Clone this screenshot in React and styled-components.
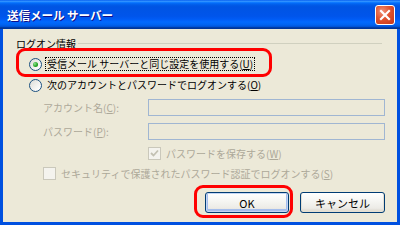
import styled, { createGlobalStyle } from 'styled-components'

const GlobalStyle = createGlobalStyle`
    html, body {
        margin: 0;
        padding: 0;
        width: 400px;
        height: 225px;
        overflow: hidden;
        background: #ece9d8;
    }
`

const font = `"Noto Sans CJK JP", "Noto Sans", sans-serif`

const Window = styled.div`
    width: 400px;
    height: 225px;
    display: flex;
    flex-direction: column;
    background: #0050e0;
    font-family: ${font};
    box-sizing: border-box;
`

const TitleBar = styled.div`
    height: 29px;
    flex: none;
    display: flex;
    align-items: center;
    justify-content: space-between;
    padding: 1px 5px 0 7px;
    box-sizing: border-box;
    background: linear-gradient(
        to bottom,
        #0058ee 0%,
        #3593ff 4%,
        #288eff 6%,
        #127dff 8%,
        #036ffc 10%,
        #0262ee 14%,
        #0057e5 20%,
        #0054e3 24%,
        #0055eb 56%,
        #005bf5 66%,
        #026afe 76%,
        #0062ef 86%,
        #0052d6 92%,
        #0040ab 94%,
        #003092 100%
    );

    .title {
        color: #fff;
        font-size: 11.5px;
        font-weight: 700;
        text-shadow: 1px 1px #0f1089;
    }
`

const CloseButton = styled.div`
    width: 20px;
    height: 20px;
    box-sizing: border-box;
    border: 1px solid #fff;
    border-radius: 3px;
    background: radial-gradient(circle at 35% 30%, #f0927a 0%, #e0532f 45%, #c2361a 100%);
    display: flex;
    align-items: center;
    justify-content: center;
`

const Body = styled.div`
    flex: 1;
    margin: 0 3px 3px 3px;
    background: #ece9d8;
    padding: 8px 12px 0 9px;
    display: flex;
    flex-direction: column;
    font-size: 10px;
    color: #000;
`

const GroupHeader = styled.div`
    height: 12px;
    display: flex;
    align-items: center;
    gap: 2px;
    padding-left: 4px;
    margin-right: 3px;

    .line {
        flex: 1;
        height: 1px;
        background: #d0d0bf;
        margin-top: 1px;
    }
`

const Options = styled.div`
    display: flex;
    flex-direction: column;
    gap: 7px;
    margin-top: 8px;
    padding-left: 17px;
`

const RadioRow = styled.div`
    position: relative;
    height: 14px;
    display: flex;
    align-items: center;
    gap: 3px;
    align-self: flex-start;

    ${p => p.$marked && `
        &::after {
            content: '';
            position: absolute;
            left: -13px;
            top: -9px;
            width: 256px;
            height: 29px;
            box-sizing: border-box;
            border: 3px solid #f00;
            border-radius: 9px;
            pointer-events: none;
        }
    `}
`

const Radio = styled.span`
    width: 13px;
    height: 13px;
    box-sizing: border-box;
    border-radius: 50%;
    border: 1px solid #1c5180;
    background: linear-gradient(135deg, #dcdcd7 0%, #ffffff 90%);
    display: flex;
    align-items: center;
    justify-content: center;
    flex: none;

    &::after {
        content: '';
        display: ${p => (p.$checked ? 'block' : 'none')};
        width: 5px;
        height: 5px;
        border-radius: 50%;
        background: radial-gradient(circle at 35% 35%, #8de38d 0%, #21a121 60%, #1a8a1a 100%);
    }
`

const OptionText = styled.span`
    line-height: 12px;
    white-space: nowrap;
    padding: 0 1px;
    border: 1px dotted ${p => (p.$focused ? '#000' : 'transparent')};
    color: ${p => (p.$disabled ? '#aca899' : '#000')};
`

const FieldRow = styled.div`
    height: 17px;
    display: flex;
    align-items: center;
    padding-left: 14px;
`

const FieldLabel = styled.span`
    width: 105px;
    flex: none;
    color: #aca899;
    white-space: nowrap;
`

const TextBox = styled.div`
    flex: 1;
    height: 17px;
    box-sizing: border-box;
    border: 1px solid #a0b6d2;
    background: #ece9d8;
`

const CheckRow = styled.div`
    height: 13px;
    display: flex;
    align-items: center;
    gap: 3px;
    padding-left: ${p => p.$indent}px;
`

const CheckBox = styled.span`
    width: 13px;
    height: 13px;
    box-sizing: border-box;
    border: 1px solid #cac8bb;
    background: #f4f3ee;
    display: flex;
    align-items: center;
    justify-content: center;
    flex: none;
`

const ButtonRow = styled.div`
    display: flex;
    justify-content: flex-end;
    gap: 11px;
    margin-top: 12px;
`

const Button = styled.div`
    position: relative;
    width: ${p => p.$width}px;
    height: 21px;
    box-sizing: border-box;
    border: 1px solid #003c74;
    border-radius: 3px;
    background: linear-gradient(to bottom, #ffffff 0%, #f6f6f3 40%, #ecebe6 80%, #d6d0c5 100%);
    display: flex;
    align-items: center;
    justify-content: center;
    font-size: 11px;
    font-weight: 400;
    color: #000;
    box-shadow: ${p => (p.$default ? 'inset 0 0 0 1px #c4d6f4, inset 0 -1px 0 2px #a4bdec' : 'inset 0 -1px 0 1px #e3dfd3')};

    ${p => p.$marked && `
        &::after {
            content: '';
            position: absolute;
            left: -12px;
            top: -8px;
            width: 99px;
            height: 33px;
            box-sizing: border-box;
            border: 3px solid #f00;
            border-radius: 9px;
            pointer-events: none;
        }
    `}
`

export default function App() {
    return (
        <>
            <GlobalStyle />
            <Window>
                <TitleBar>
                    <span className='title'>送信メール サーバー</span>
                    <CloseButton>
                        <svg width='12' height='12' viewBox='0 0 12 12'>
                            <path d='M2 2 L10 10 M10 2 L2 10' stroke='#fff' strokeWidth='2.2' strokeLinecap='square' />
                        </svg>
                    </CloseButton>
                </TitleBar>
                <Body>
                    <GroupHeader>
                        <span>ログオン情報</span>
                        <span className='line' />
                    </GroupHeader>
                    <Options>
                        <RadioRow $marked>
                            <Radio $checked />
                            <OptionText $focused>
                                受信メール サーバーと同じ設定を使用する(<u>U</u>)
                            </OptionText>
                        </RadioRow>
                        <RadioRow>
                            <Radio />
                            <OptionText>
                                次のアカウントとパスワードでログオンする(<u>O</u>)
                            </OptionText>
                        </RadioRow>
                        <FieldRow>
                            <FieldLabel>アカウント名(<u>C</u>):</FieldLabel>
                            <TextBox />
                        </FieldRow>
                        <FieldRow>
                            <FieldLabel>パスワード(<u>P</u>):</FieldLabel>
                            <TextBox />
                        </FieldRow>
                        <CheckRow $indent={119}>
                            <CheckBox>
                                <svg width='9' height='9' viewBox='0 0 9 9'>
                                    <path d='M1 4 L3.5 6.5 L8 1.5' stroke='#c3c1b3' strokeWidth='1.8' fill='none' />
                                </svg>
                            </CheckBox>
                            <OptionText $disabled>パスワードを保存する(<u>W</u>)</OptionText>
                        </CheckRow>
                        <CheckRow $indent={14}>
                            <CheckBox />
                            <OptionText $disabled>
                                セキュリティで保護されたパスワード認証でログオンする(<u>S</u>)
                            </OptionText>
                        </CheckRow>
                    </Options>
                    <ButtonRow>
                        <Button $width={84} $default $marked>OK</Button>
                        <Button $width={85}>キャンセル</Button>
                    </ButtonRow>
                </Body>
            </Window>
        </>
    )
}
